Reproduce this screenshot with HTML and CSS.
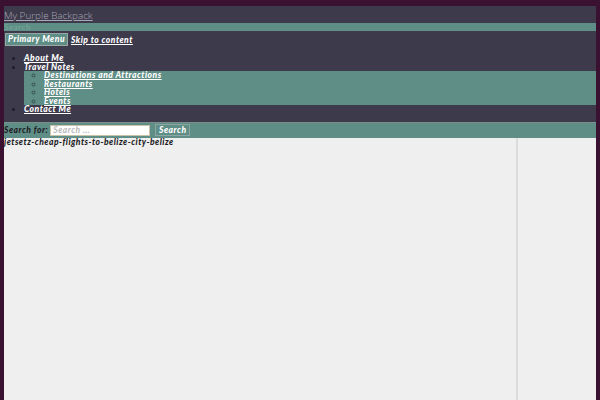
FILE: index.html
```html
<!DOCTYPE html>
<html>
<head>
<meta charset="utf-8">
<link rel="stylesheet" href="styles.css">
</head>
<body>
<div class="page">
  <header class="site-header">
    <a class="site-title" href="#">My Purple Backpack</a>
  </header>
  <div class="search-toggle">Search</div>
  <nav class="main-nav">
    <div class="nav-top">
      <button class="menu-toggle">Primary Menu</button>
      <a class="skip" href="#">Skip to content</a>
    </div>
    <ul class="menu">
      <li><a href="#">About Me</a></li>
      <li><span class="parent">Travel Notes</span>
        <ul class="sub-menu">
          <li><a href="#">Destinations and Attractions</a></li>
          <li><a href="#">Restaurants</a></li>
          <li><a href="#">Hotels</a></li>
          <li><a href="#">Events</a></li>
        </ul>
      </li>
      <li><a href="#">Contact Me</a></li>
    </ul>
  </nav>
  <form class="search-form">
    <label class="search-label">Search for:</label>
    <input class="search-field" type="text" placeholder="Search …">
    <button class="search-submit" type="button">Search</button>
  </form>
  <div class="content-wrap">
    <main class="content">
      <h1 class="entry-title">jetsetz-cheap-flights-to-belize-city-belize</h1>
    </main>
    <aside class="sidebar"></aside>
  </div>
</div>
</body>
</html>
```
FILE: styles.css
```css
html, body {
  margin: 0;
  height: 100%;
}
body {
  background: #3a1131;
  padding: 6px 4px 0 4px;
  box-sizing: border-box;
  font-family: Lato, "DejaVu Sans", sans-serif;
  font-size: 8.5px;
  letter-spacing: 0.5px;
  overflow: hidden;
}
.page {
  display: flex;
  flex-direction: column;
  height: 100%;
}
.site-header {
  background: #3d3a4b;
  height: 17px;
  display: flex;
  align-items: center;
}
.site-title {
  color: #a9a8b8;
  font-family: "Open Sans", sans-serif;
  font-weight: 300;
  font-size: 9.9px;
  letter-spacing: 0;
  text-decoration: underline;
  line-height: 12px;
}
.search-toggle {
  background: #5f8e86;
  height: 8px;
  line-height: 8px;
  color: #6fa494;
  font-size: 8px;
  font-weight: 700;
}
.main-nav {
  background: #3d3a4b;
  padding: 2px 0 8px;
}
.nav-top {
  display: flex;
  align-items: center;
  gap: 3px;
}
.menu-toggle {
  margin: 0 0 0 1px;
  background: #5f8e86;
  border: 1px solid #9aa6a4;
  color: #ffffff;
  font-family: Lato, sans-serif;
  font-weight: 900;
  font-style: italic;
  font-size: 8.5px;
  letter-spacing: 0.5px;
  height: 13px;
  width: 63px;
  padding: 0;
  line-height: 11px;
}
.skip {
  color: #ffffff;
  font-weight: 900;
  font-style: italic;
}
.menu {
  margin: 8px 0 0;
  padding-left: 20px;
  color: #ffffff;
}
.menu li {
  font-weight: 900;
  font-style: italic;
  line-height: 8.5px;
}
.menu li::marker {
  color: #1f1d28;
}
.menu a {
  color: #ffffff;
}
.sub-menu {
  background: #5f8e86;
  margin: 0;
  padding: 0 0 0 20px;
}
.sub-menu li::marker {
  color: #2f4f49;
}
.search-form {
  background: #5f8e86;
  border-top: 1px solid #7c8f8c;
  height: 15px;
  display: flex;
  align-items: center;
  margin: 0;
}
.search-label {
  color: #1e1d26;
  font-weight: 900;
  font-style: italic;
  margin-right: 2px;
}
.search-field {
  width: 100px;
  height: 11px;
  box-sizing: border-box;
  border: 1px solid #c9c1a8;
  background: #ffffff;
  padding: 0 2px;
  font-family: Lato, sans-serif;
  font-size: 8.5px;
  letter-spacing: 0.5px;
  font-weight: 700;
  font-style: italic;
  margin: 0 5px 0 0;
}
.search-field::placeholder {
  color: #b8b8b8;
}
.search-submit {
  background: #5f8e86;
  border: 1px solid #8ea6a1;
  color: #ffffff;
  font-family: Lato, sans-serif;
  font-weight: 900;
  font-style: italic;
  font-size: 8.5px;
  letter-spacing: 0.5px;
  height: 12px;
  width: 35px;
  padding: 0;
  line-height: 10px;
}
.content-wrap {
  flex: 1;
  display: flex;
  background: #efefef;
}
.content {
  width: 512px;
  border-right: 2px solid #dcdcdc;
}
.entry-title {
  margin: 0;
  color: #1e1d26;
  font-size: 8.5px;
  font-weight: 900;
  font-style: italic;
  line-height: 9px;
}
.sidebar {
  flex: 1;
}
```
